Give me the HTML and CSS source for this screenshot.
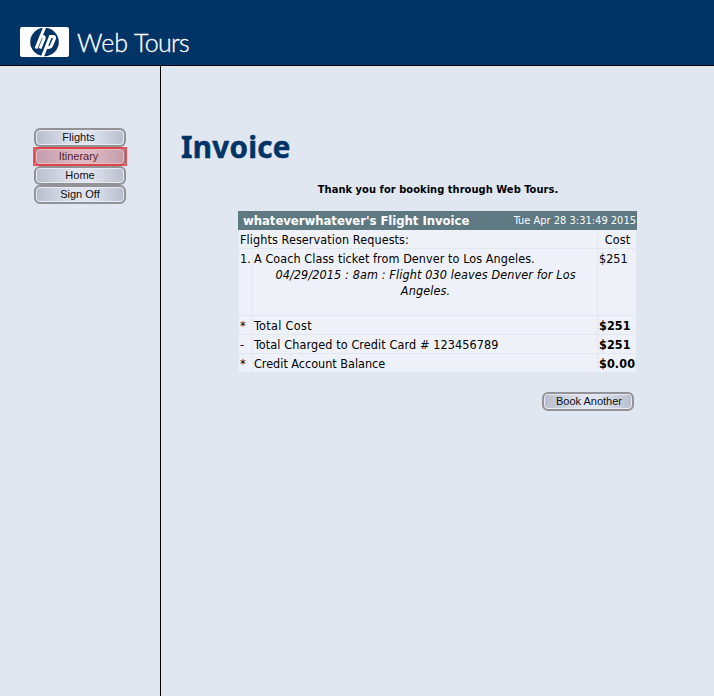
FILE: index.html
```html
<!DOCTYPE html>
<html lang="en">
<head>
<meta charset="utf-8">
<title>Web Tours</title>
<link rel="stylesheet" href="styles.css">
</head>
<body>
<header class="banner">
  <svg class="logo" width="49" height="30" viewBox="0 0 49 30" aria-label="hp">
    <rect width="49" height="30" rx="2" fill="#fff"/>
    <ellipse cx="24.5" cy="15" rx="14.3" ry="14.2" fill="#036"/>
    <g fill="none" stroke="#fff" stroke-width="3">
      <path d="M25.2-1 16 21.5M19.5 9.5h3.2q2.1 0 1.3 2.1l-4 9.9"/>
      <path d="M30.4 9.5 21.9 31M29 9.5h4q2.2 0 1.4 2.1l-2.9 7q-.7 1.8-2.7 1.8h-2.8"/>
    </g>
  </svg>
  <div class="brand"><span class="web">Web</span><span class="tours">Tours</span></div>
</header>
<div class="layout">
  <nav class="sidebar">
    <a class="button">Flights</a>
    <a class="button active">Itinerary</a>
    <a class="button">Home</a>
    <a class="button">Sign Off</a>
  </nav>
  <main class="content">
    <h1>Invoice</h1>
    <p class="thanks">Thank you for booking through Web Tours.</p>
    <section class="invoice">
      <div class="title"><b>whateverwhatever's Flight Invoice</b><small>Tue Apr 28 3:31:49 2015</small></div>
      <div class="rows">
        <div class="cell wide requests">Flights Reservation Requests:</div><div class="cell center">Cost</div>
        <div class="cell">1.</div>
        <div class="cell"><span class="ticket">A Coach Class ticket from Denver to Los Angeles.</span><div class="detail"><i>04/29/2015 : 8am : Flight 030 leaves Denver for Los</i><br><i>Angeles.</i></div></div>
        <div class="cell">$251</div>
        <div class="cell">*</div><div class="cell total">Total Cost</div><div class="cell amount">$251</div>
        <div class="cell">-</div><div class="cell charged">Total Charged to Credit Card # 123456789</div><div class="cell amount">$251</div>
        <div class="cell">*</div><div class="cell balance">Credit Account Balance</div><div class="cell amount">$0.00</div>
      </div>
    </section>
    <a class="button another">Book Another</a>
  </main>
</div>
</body>
</html>
```
FILE: styles.css
```css
* { box-sizing: border-box; }
body { margin: 0; background: #e0e7f1; color: #000; font: 12.5px/16px "DejaVu Sans Condensed", "DejaVu Sans", sans-serif; font-stretch: condensed; }
.banner { height: 66px; padding: 27px 0 0 20px; display: flex; background: #036; border-bottom: 1px solid #000; }
.logo { flex: none; }
.brand { height: 32px; margin: -1px 0 0 8px; display: flex; color: #fff; font: 25px/32px Lato, sans-serif; font-weight: 300; -webkit-text-stroke: .3px #fff; }
.web { width: 57px; letter-spacing: 0; }
.tours { letter-spacing: -.7px; }
.layout { display: flex; height: 630px; }
.sidebar { width: 161px; border-right: 1px solid #000; padding: 62px 0 0 34px; display: flex; flex-direction: column; }
.button { display: block; position: relative; width: 92px; height: 19px; border: 2px solid #929297; border-radius: 6px; background: linear-gradient(90deg, #b9becd, #dfe4f0 45%, #dfe4f0 62%, #b9becd); box-shadow: inset 0 0 0 1px #e6ebf3; color: #111; font: 11px/15px "Liberation Sans", sans-serif; text-align: center; padding-right: 3px; }
.button:nth-child(3), .button:nth-child(4) { padding-right: 0; }
.active { color: #201015; }
.active::after { content: ""; position: absolute; inset: -2px -3px; border: 2px solid rgba(240, 50, 55, .8); background: rgba(220, 65, 75, .27); background-clip: padding-box; }
.content { flex: 1; padding: 62px 0 0 20px; }
h1 { margin: 0; height: 38px; color: #036; font: bold 29.5px/37px "Noto Sans", sans-serif; letter-spacing: .3px; -webkit-text-stroke: .5px #036; }
.thanks { margin: 15px 0 0; height: 16px; width: 514px; text-align: center; font-weight: bold; font-size: 11px; letter-spacing: .05px; line-height: 17px; }
.invoice { width: 399px; margin: 14px 0 0 57px; }
.title { height: 19px; display: flex; justify-content: space-between; padding: 0 1px 0 5px; background: #5e7981; color: #fff; line-height: 19px; white-space: nowrap; }
.title b { font-size: 13px; letter-spacing: -.05px; }
.title small { font-size: 11px; line-height: 20px; }
.rows { width: 397px; margin-left: 1px; display: grid; grid-template-columns: 13px 344px 38px; grid-template-rows: 18px 66px 18px 18px 18px; gap: 1px; }
.cell { background: #eef2f8; padding: 2px 0 0 1px; white-space: nowrap; }
.wide { grid-column: span 2; }
.center { text-align: center; letter-spacing: .1px; }
.requests { letter-spacing: .09px; }
.ticket { letter-spacing: .07px; }
.detail { text-align: center; letter-spacing: .12px; }
.total { letter-spacing: .33px; }
.charged { letter-spacing: .11px; }
.balance { letter-spacing: 0; }
.amount { font-weight: bold; letter-spacing: .1px; }
.another { margin: 20px 0 0 361px; padding: 0 0 0 2px; }
```
